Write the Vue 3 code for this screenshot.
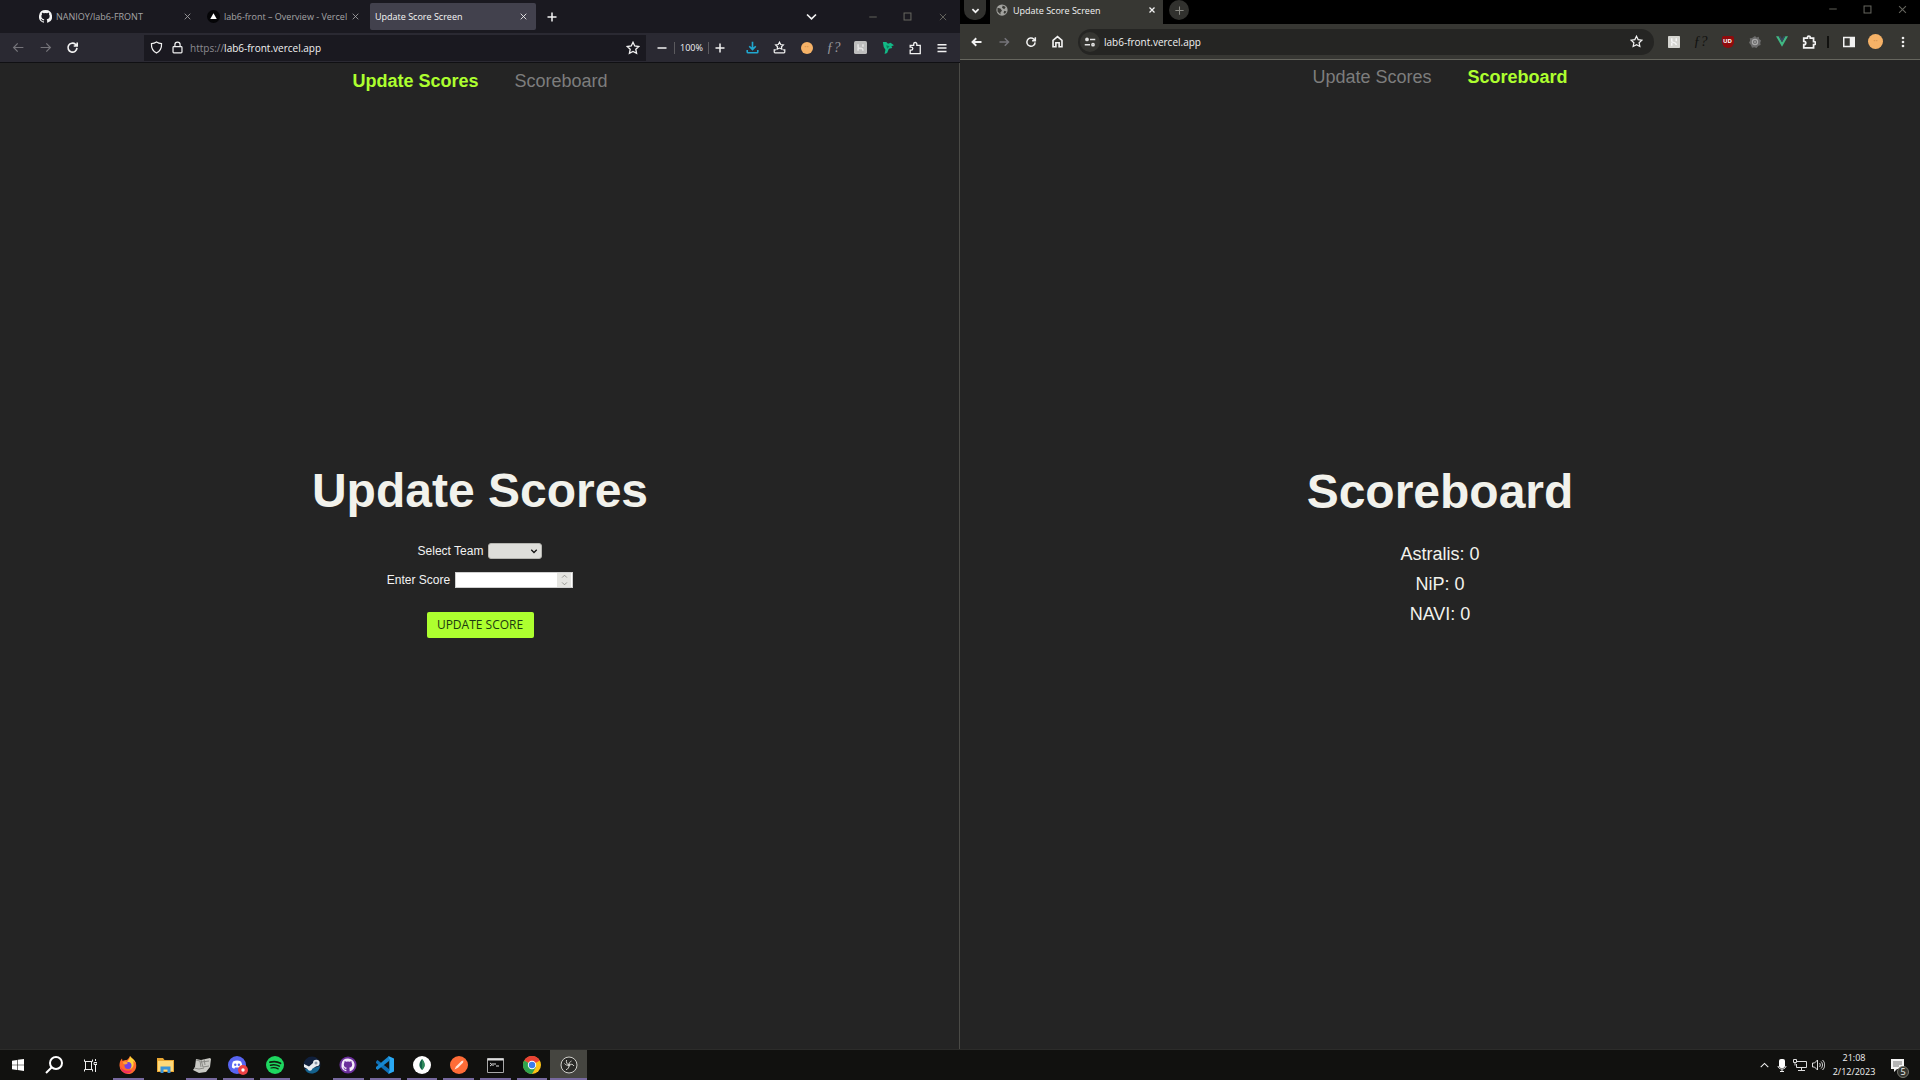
<script setup>
import { h, ref } from 'vue'

const glyphs = {
  back: 'M14 8H2M7 3L2 8l5 5',
  forward: 'M2 8h12M9 3l5 5-5 5',
  reload: 'M13.5 8.5a5.5 5.5 0 1 1-1.8-4.4L13.5 6M13.8 1.8V6.200H9.500',
  close: 'M3 3l10 10M13 3L3 13',
  plus: 'M8 2v12M2 8h12',
  minus: 'M2 8h12',
  square: 'M3 3h10v10H3z',
  down: 'M2.500 5.500L8 11l5.500-5.500',
  up: 'M2.500 10.500L8 5l5.500 5.500',
  shield: 'M8 1.300c2 1.400 4 1.900 6.200 2 .3 5-1.700 9-6.200 11.400C3.500 12.300 1.500 8.300 1.800 3.300 4 3.200 6 2.700 8 1.300z',
  lock: 'M3.500 7h9a1 1 0 0 1 1 1v5.500a1 1 0 0 1-1 1h-9a1 1 0 0 1-1-1V8a1 1 0 0 1 1-1zM4.800 7V4.600a3.200 3.200 0 0 1 6.400 0V7',
  star: 'M8 1.500l2 4.200 4.600.6-3.400 3.200.9 4.600L8 11.900l-4.100 2.200.9-4.600L1.400 6.300 6 5.700z',
  download: 'M8 1v9M4 6.500L8 10.500l4-4M1.500 11v2.500a1 1 0 0 0 1 1h11a1 1 0 0 0 1-1V11',
  saved: 'M8 1.500l1.500 2.800 3.200.5-2.300 2.200.5 3.100L8 8.700l-2.900 1.400.5-3.100-2.300-2.200 3.200-.5zM3.500 11H1.500v2.500a1 1 0 0 0 1 1h11a1 1 0 0 0 1-1V11h-2',
  puzzle: 'M2.500 14.500v-4h1.200a1.800 1.800 0 0 0 0-3.600H2.500V5h4V3.500a1.800 1.800 0 0 1 3.600 0V5h3.900v9.500z',
  puzzleRight: 'M2 3.500h4.200V2.800a1.600 1.600 0 0 1 3.200 0v.7h3.800v4h.6a1.700 1.700 0 0 1 0 3.400h-.6v3.800H2v-3.600h.4a1.900 1.900 0 0 0 0-3.800H2z',
  menu: 'M2 3.500h12M2 8h12M2 12.500h12',
  home: 'M2.500 6.500L8 2l5.500 4.500v8h-3.500V9.500H6v5H2.500z',
}

const octocat = 'M8 0a8 8 0 0 0-2.530 15.590c.4.070.550-.170.550-.380v-1.500C3.730 14.200 3.300 12.800 3.300 12.800c-.4-.9-.9-1.200-.9-1.200-.7-.5.1-.5.1-.5.8.1 1.200.8 1.200.8.7 1.200 1.900.9 2.400.7.1-.5.300-.9.500-1.100-1.800-.2-3.700-.9-3.700-4 0-.9.3-1.600.8-2.100-.1-.2-.4-1 .1-2.100 0 0 .7-.2 2.200.8a7.600 7.600 0 0 1 4 0c1.500-1 2.200-.8 2.200-.8.400 1.100.2 1.900.1 2.100.5.600.8 1.300.8 2.100 0 3.100-1.900 3.800-3.700 4 .3.300.6.8.6 1.500v2.200c0 .2.100.500.6.400A8 8 0 0 0 8 0z'

const Icon = ({ name, size = 14, weight = 1.5 }) =>
  h('svg', {
    width: size, height: size, viewBox: '0 0 16 16', fill: 'none',
    stroke: 'currentColor', 'stroke-width': weight, 'aria-hidden': 'true',
  }, [h('path', { d: glyphs[name] })])
Icon.props = ['name', 'size', 'weight']

const team = ref('')
const score = ref('')
const teams = ref([
  { name: 'Astralis', score: 0 },
  { name: 'NiP', score: 0 },
  { name: 'NAVI', score: 0 },
])
function updateScore() {
  const match = teams.value.find((t) => t.name === team.value)
  if (match && score.value !== '') match.score = Number(score.value)
}
</script>

<template>
  <div class="desktop">
    <div class="windows">
      <section class="pane firefox" aria-label="Firefox">
        <div class="ff-tabs">
          <div class="ff-tab">
            <svg width="13" height="13" viewBox="0 0 16 16" fill="#f4f4f4"><path :d="octocat" /></svg>
            <button class="title">NANIOY/lab6-FRONT</button>
            <button class="x" aria-label="Close tab"><Icon name="close" :size="9" /></button>
          </div>
          <div class="ff-tab">
            <svg width="13" height="13" viewBox="0 0 16 16"><circle cx="8" cy="8" r="8" fill="#050507" /><path d="M8 4l4 7H4z" fill="#fff" /></svg>
            <button class="title">lab6-front – Overview - Vercel</button>
            <button class="x" aria-label="Close tab"><Icon name="close" :size="9" /></button>
          </div>
          <div class="ff-tab active">
            <button class="title">Update Score Screen</button>
            <button class="x" aria-label="Close tab"><Icon name="close" :size="9" /></button>
          </div>
          <button class="slot light" aria-label="New tab"><Icon name="plus" :size="12" weight="2" /></button>
          <span class="fill"></span>
          <button class="slot light list-tabs" aria-label="List all tabs"><Icon name="down" :size="13" weight="2" /></button>
          <div class="wincontrols">
            <button class="winbtn" aria-label="Minimize"><Icon name="minus" :size="10" /></button>
            <button class="winbtn" aria-label="Maximize"><Icon name="square" :size="11" /></button>
            <button class="winbtn" aria-label="Close"><Icon name="close" :size="10" /></button>
          </div>
        </div>

        <div class="ff-bar">
          <button class="slot dim" aria-label="Back"><Icon name="back" :size="13" /></button>
          <button class="slot dim" aria-label="Forward"><Icon name="forward" :size="13" /></button>
          <button class="slot" aria-label="Reload"><Icon name="reload" :size="13" weight="2" /></button>
          <div class="ff-url">
            <Icon name="shield" :size="13" />
            <Icon name="lock" :size="13" />
            <label for="ff-address">https://</label>
            <input id="ff-address" type="text" value="lab6-front.vercel.app" />
            <button class="slot" aria-label="Bookmark"><Icon name="star" :size="14" /></button>
          </div>
          <button class="zoom-out" aria-label="Zoom out"><Icon name="minus" :size="12" weight="2" /></button>
          <button class="zoom-level">100%</button>
          <button class="zoom-in" aria-label="Zoom in"><Icon name="plus" :size="12" weight="2" /></button>
          <button class="slot cyan" aria-label="Downloads"><Icon name="download" :size="13" weight="2" /></button>
          <button class="slot" aria-label="Bookmarks"><Icon name="saved" :size="13" /></button>
          <button class="slot" aria-label="Account"><span class="face">••</span></button>
          <button class="slot fn">ƒ?</button>
          <button class="slot" aria-label="Extension"><svg width="13" height="13" viewBox="0 0 16 16"><rect width="16" height="16" rx="2" fill="#bdbdbd" /><path d="M5 4v3c0 2 1 2 3 2s3 0 3 3M5 12V9M11 4v3" stroke="#e4e4e4" stroke-width="2" fill="none" /></svg></button>
          <button class="slot" aria-label="Extension"><svg width="12" height="13" viewBox="0 0 14 15"><path d="M1 1h4l2 2 3-1 4 3-3 1 1 2-4 1-2 5-3 1 1-5-2-3z" fill="#12b886" /><path d="M5 5l4 1-3 3z" fill="#087f5b" /></svg></button>
          <button class="slot" aria-label="Extensions"><Icon name="puzzle" :size="14" /></button>
          <button class="slot" aria-label="Menu"><Icon name="menu" :size="12" weight="2" /></button>
        </div>

        <div class="page">
          <nav>
            <a href="#update" class="current">Update Scores</a>
            <a href="#scoreboard">Scoreboard</a>
          </nav>
          <main>
            <h1>Update Scores</h1>
            <form @submit.prevent="updateScore">
              <div class="field">
                <label for="team">Select Team</label>
                <span class="control team">
                  <select id="team" v-model="team">
                    <option value=""></option>
                    <option v-for="t in teams" :key="t.name" :value="t.name">{{ t.name }}</option>
                  </select>
                  <Icon name="down" :size="8" weight="2.500" />
                </span>
              </div>
              <div class="field">
                <label for="score">Enter Score</label>
                <span class="control score">
                  <input id="score" v-model="score" type="number" />
                  <span class="spin"><Icon name="up" :size="7" weight="2" /><Icon name="down" :size="7" weight="2" /></span>
                </span>
              </div>
              <button type="submit" class="submit">UPDATE SCORE</button>
            </form>
          </main>
        </div>
      </section>

      <section class="pane chrome" aria-label="Chrome">
        <div class="cr-tabs">
          <button class="round" aria-label="Search tabs"><Icon name="down" :size="9" weight="3" /></button>
          <div class="cr-tab">
            <svg width="12" height="12" viewBox="0 0 16 16"><circle cx="8" cy="8" r="7.500" fill="#a3a39f" /><path d="M2 5l4 1 2 3-2 2v3L2 10zM9 2l4 2-2 3-3-2zM11 9l3 1-2 3-2-1z" fill="#3a3a36" /></svg>
            <button class="title">Update Score Screen</button>
            <button class="x" aria-label="Close tab"><Icon name="close" :size="8" weight="2.500" /></button>
          </div>
          <button class="round new" aria-label="New tab"><Icon name="plus" :size="11" /></button>
          <span class="fill"></span>
          <div class="wincontrols">
            <button class="winbtn" aria-label="Minimize"><Icon name="minus" :size="10" /></button>
            <button class="winbtn" aria-label="Maximize"><Icon name="square" :size="11" /></button>
            <button class="winbtn" aria-label="Close"><Icon name="close" :size="11" /></button>
          </div>
        </div>

        <div class="cr-bar">
          <button class="slot" aria-label="Back"><Icon name="back" :size="12" weight="2.500" /></button>
          <button class="slot dim" aria-label="Forward"><Icon name="forward" :size="12" weight="2" /></button>
          <button class="slot" aria-label="Reload"><Icon name="reload" :size="12" weight="2" /></button>
          <button class="slot" aria-label="Home"><Icon name="home" :size="13" weight="2" /></button>
          <div class="cr-url">
            <button class="site" aria-label="Site information">
              <svg width="12" height="12" viewBox="0 0 16 16" fill="none" stroke="#e3e3e3" stroke-width="2"><circle cx="4" cy="4.500" r="1.500" fill="#e3e3e3" /><path d="M8 4.500h7M1 11.500h7" /><circle cx="12" cy="11.500" r="1.500" /></svg>
            </button>
            <input type="text" aria-label="Address" value="lab6-front.vercel.app" />
            <button class="slot" aria-label="Bookmark"><Icon name="star" :size="13" /></button>
          </div>
          <button class="slot" aria-label="Extension"><svg width="12" height="12" viewBox="0 0 16 16"><rect width="16" height="16" rx="1" fill="#d4d4cf" /><path d="M5 3v4c0 2 6 1 6 5M5 13V9M11 3v4" stroke="#f5f5f5" stroke-width="2" fill="none" /></svg></button>
          <button class="slot fn dark">ƒ?</button>
          <button class="slot" aria-label="uBlock"><span class="ublock">UD</span></button>
          <button class="slot" aria-label="Extension"><svg width="12" height="12" viewBox="0 0 16 16"><path d="M8 0l2 2 3-1 .5 3L16 6l-1 3 .5 3-3 1L10 16l-3-1-3 .5L2.500 12 0 9l1.500-3L1 3l3-.5z" fill="#6c6c6c" /><circle cx="8" cy="8" r="3.500" fill="none" stroke="#aaa" stroke-width="1.500" /><circle cx="8" cy="8" r="1" fill="#ccc" /></svg></button>
          <button class="slot" aria-label="Vue devtools"><svg width="12" height="11" viewBox="0 0 16 14"><path d="M0 0h3.500L8 8l4.500-8H16L8 14z" fill="#41b883" /><path d="M3.500 0H6l2 3.500L10 0h2.500L8 8z" fill="#35495e" /></svg></button>
          <button class="slot" aria-label="Extensions"><Icon name="puzzleRight" :size="14" weight="2" /></button>
          <span class="divider"></span>
          <button class="slot" aria-label="Side panel"><svg width="12" height="12" viewBox="0 0 16 16"><path d="M1 2h14v12H1z" fill="none" stroke="#f1f1f1" stroke-width="2" /><path d="M9 2h6v12H9z" fill="#f1f1f1" /></svg></button>
          <button class="slot" aria-label="Profile"><span class="face big">••</span></button>
          <button class="slot" aria-label="Menu"><svg width="4" height="12" viewBox="0 0 4 12" fill="#eee"><circle cx="2" cy="2" r="1.300" /><circle cx="2" cy="6" r="1.300" /><circle cx="2" cy="10" r="1.300" /></svg></button>
        </div>

        <div class="page">
          <nav>
            <a href="#update">Update Scores</a>
            <a href="#scoreboard" class="current">Scoreboard</a>
          </nav>
          <main>
            <h1>Scoreboard</h1>
            <ul class="scores">
              <li v-for="t in teams" :key="t.name">{{ t.name }}: {{ t.score }}</li>
            </ul>
          </main>
        </div>
      </section>
    </div>

    <footer class="taskbar">
      <button class="sys" aria-label="Start"><svg width="12" height="12" viewBox="0 0 16 16" fill="#fff"><path d="M0 2.200l6.800-1v6.300H0zM7.600 1.100L16 0v7.500H7.600zM0 8.400h6.800v6.300l-6.800-1zM7.600 8.400H16V16l-8.400-1.200z" /></svg></button>
      <button class="sys" aria-label="Search"><svg width="18" height="18" viewBox="0 0 18 18" fill="none" stroke="#fff" stroke-width="2"><circle cx="11" cy="7" r="6" /><path d="M6.500 11.500L1 17" /></svg></button>
      <button class="sys" aria-label="Task view"><svg width="13" height="13" viewBox="0 0 13 13" fill="none" stroke="#eee"><path d="M.5.500v2h8v-2M.5 12.500v-2h8v2M1.500 3v7.500M7.500 3v7.500M11.500 0v2M11.500 6v7M10 3.500h3v2h-3z" /></svg></button>
      <div class="apps">
        <button class="app open" aria-label="Firefox">
          <svg width="18" height="18" viewBox="0 0 18 18"><path d="M9 18a8.500 8.500 0 0 1-8.500-9C.6 6 1.500 4 3 2.500L3.500 5C5 4 6.500 4 7.500 4 9 3.500 10 2 11 0c1 2 4 3 5.500 6 2.500 6-1.500 12-7.500 12z" fill="#ff6a2b" /><path d="M11 0c1 2 5 3.500 6 8-1-2-2-2.500-3-3 1.500 4 0 7-3 8.500 2-4 .5-7-3-8C10 4 11 2 11 0z" fill="#ffd43a" /><circle cx="9" cy="9.500" r="3.500" fill="#7542e5" /><path d="M1 10c2 4 7 6 12 4-2 5-10 5-12-4z" fill="#f5305f" /><path d="M4 6c2-1 4 0 5 1L7 8.500 4.500 8z" fill="#ffa436" /></svg>
        </button>
        <button class="app" aria-label="File Explorer">
          <svg width="17" height="15" viewBox="0 0 17 15"><path d="M0 0h6l1.500 2H17v12H0z" fill="#e9a733" /><path d="M1 3h15v10H1z" fill="#ffd979" /><path d="M3.500 15V8.500h10V15h-3v-3.500h-4V15z" fill="#3a94d8" /></svg>
        </button>
        <button class="app open" aria-label="Notepad">
          <svg width="18" height="16" viewBox="0 0 18 16"><path d="M3 2l5 1 9-2 1 1-1 8-4 5-7 1-6-3 2-3z" fill="#c9c9c4" /><path d="M3 3l4 1 1 6M8 3l2 7 6-1M8 5l8-1M1 11l5 1 5-1M11 2l1 6" stroke="#8a8a86" fill="none" /></svg>
        </button>
        <button class="app open" aria-label="Discord">
          <svg width="20" height="19" viewBox="0 0 20 19"><circle cx="9" cy="9" r="9" fill="#5865f2" /><path d="M5 5.500c2.500-1.500 5.500-1.500 8 0 1 2 1.500 4 1.200 6-1 .8-1.700 1-2.500 1.200L11 11.500H7l-.7 1.200C5.500 12.500 4.800 12.200 4 11.500c-.3-2 .2-4 1-6z" fill="#fff" /><circle cx="7.300" cy="8.800" r="1.200" fill="#5865f2" /><circle cx="10.900" cy="8.800" r="1.200" fill="#5865f2" /><circle cx="15" cy="14" r="5" fill="#ed4245" /><circle cx="15" cy="14" r="1.700" fill="#fff" /></svg>
        </button>
        <button class="app open" aria-label="Spotify">
          <svg width="18" height="18" viewBox="0 0 18 18" fill="none" stroke="#10200f" stroke-linecap="round"><circle cx="9" cy="9" r="9" fill="#1ed760" stroke="none" /><path d="M4 6.200c3.500-1 7.500-.7 10.500 1" stroke-width="1.800" /><path d="M4.500 9.200c3-.8 6-.5 8.800 1" stroke-width="1.500" /><path d="M5 12c2.500-.6 5-.3 7.200.9" stroke-width="1.200" /></svg>
        </button>
        <button class="app" aria-label="Steam">
          <svg width="18" height="18" viewBox="0 0 18 18"><circle cx="9" cy="9" r="8.500" fill="#10203c" /><path d="M2 13c5 0 10-1 15-3-1 9-13 10-15 3z" fill="#14618c" /><path d="M1 8l5 2.500 4-3.500a3.300 3.300 0 1 1 3.300 3.300l-4 2.500A2.500 2.500 0 0 1 4.500 13L1 11z" fill="#e9edf1" /><circle cx="13" cy="7" r="1.500" fill="#8a97a8" /></svg>
        </button>
        <button class="app open" aria-label="GitHub Desktop">
          <svg width="18" height="18" viewBox="-3 -3 22 22"><circle cx="8" cy="8" r="10.500" fill="#6b2f9b" /><path :d="octocat" fill="#f3eafa" /></svg>
        </button>
        <button class="app open" aria-label="Visual Studio Code">
          <svg width="18" height="18" viewBox="0 0 18 18"><path d="M0 5.500L1.500 4 13 13v5L0 7z" fill="#0f6fb5" /><path d="M0 12.500L1.500 14 13 5V0L0 11z" fill="#1787cf" /><path d="M12.500 0L18 2.500v13L12.500 18l.8-4V4z" fill="#2aa9f4" /></svg>
        </button>
        <button class="app open" aria-label="MongoDB Compass">
          <svg width="18" height="18" viewBox="0 0 18 18"><circle cx="9" cy="9" r="9" fill="#fff" /><path d="M9 3c3.500 4 3.500 8 0 11-3.500-3-3.500-7 0-11z" fill="#116149" /><path d="M9 3c3.500 4 3.500 8 0 11z" fill="#2f8a5a" /></svg>
        </button>
        <button class="app open" aria-label="Postman">
          <svg width="18" height="18" viewBox="0 0 18 18"><circle cx="9" cy="9" r="9" fill="#ff6c37" /><path d="M4.500 13.500l1.500-3 5.500-5.500 2-.5-.5 2.300-5 5z" fill="#ffe4d8" /></svg>
        </button>
        <button class="app open" aria-label="Command Prompt">
          <svg width="17" height="15" viewBox="0 0 17 15"><path d="M.5.500h16v14H.5z" fill="#090909" stroke="#a8a8a8" /><path d="M.5 1.500h16" stroke="#ddd" stroke-width="2" /><path d="M3 5l2 1.500L3 8M6 5v3M8 5v2M9 8h3" stroke="#ddd" fill="none" /></svg>
        </button>
        <button class="app open" aria-label="Chrome">
          <svg width="18" height="18" viewBox="0 0 18 18"><circle cx="9" cy="9" r="9" fill="#fbc116" /><path d="M9 9L1.200 4.500a9 9 0 0 1 15.600 0z" fill="#ea4335" /><path d="M9 9L1.200 4.500A9 9 0 0 0 9 18l3.900-6.700z" fill="#30a44e" /><path d="M9 5h7.800l-.3-.7L9 3z" fill="#ea4335" /><circle cx="9" cy="9" r="4.200" fill="#fff" /><circle cx="9" cy="9" r="3.200" fill="#3b7ded" /></svg>
        </button>
        <button class="app open selected" aria-label="OBS Studio">
          <svg width="18" height="18" viewBox="0 0 18 18" fill="none" stroke="#d0d0cb"><circle cx="9" cy="9" r="8" fill="#2a2a27" /><path d="M6.500 4c-.5 2.500.5 4.300 2.500 5 2-1.200 3.800-1 5 1M9 9c.2 2.300-.8 4-3 4.800M9 9c-1.800.6-3.500 0-4.500-1.500M9 9c0-2 .8-3.200 2.500-4" /><circle cx="9" cy="9" r="1" fill="#d0d0cb" /></svg>
        </button>
      </div>
      <span class="fill"></span>
      <button class="tray" aria-label="Hidden icons"><Icon name="up" :size="11" /></button>
      <button class="tray" aria-label="Microphone"><svg width="10" height="13" viewBox="0 0 10 13"><rect x="2" width="6" height="9" rx="2" fill="#fff" /><path d="M1 7c0 4 8 4 8 0M5 10v3M3 12.500h4" stroke="#eee" fill="none" /></svg></button>
      <button class="tray" aria-label="Network"><svg width="14" height="12" viewBox="0 0 14 12" fill="none" stroke="#ddd"><path d="M4 2.500h9.500v6H3.500V5M8.500 8.500v3M5 11.500h7" /><path d="M.5.500h3v3h-3zM2 3.500v3" /></svg></button>
      <button class="tray" aria-label="Volume"><svg width="13" height="12" viewBox="0 0 13 12" fill="none" stroke="#ddd"><path d="M.5 4h2l3-3v10l-3-3h-2zM7.500 4c1 1 1 3 0 4M9 2.500c2 2 2 5 0 7M10.500 1c3 3 3 7 0 10" /></svg></button>
      <time class="clock" datetime="2023-12-02T21:08"><span>21:08</span><span>2/12/2023</span></time>
      <button class="notes" aria-label="Notifications">
        <svg width="13" height="13" viewBox="0 0 13 13"><path d="M0 0h13v10H6l-3 3v-3H0z" fill="#f4f4f4" /><path d="M2 3h9M2 5h9M2 7h6" stroke="#777" /></svg>
        <span class="badge">5</span>
      </button>
    </footer>
  </div>
</template>

<style>
body { background: #242424; }
</style>

<style scoped>
.desktop { display: flex; flex-direction: column; min-height: 100vh; background: #242424; font-family: "Open Sans", "Noto Sans", sans-serif; color: #f2f2f2; }
.desktop, .desktop * { box-sizing: border-box; }
button { margin: 0; padding: 0; border: 0; background: none; color: inherit; font: inherit; display: flex; align-items: center; justify-content: center; flex: none; }
input, select { margin: 0; padding: 0; border: 0; outline: 0; font: inherit; color: inherit; background: none; }
svg { display: block; flex: none; }
.fill { flex: 1; }
.windows { flex: 1; display: grid; grid-template-columns: 1fr 1fr; }
.pane { display: flex; flex-direction: column; min-width: 0; }
.firefox { box-shadow: inset -1px 0 #4a4a46; }
.slot { width: 27px; height: 26px; }
.dim { color: #75747a; }
.light { color: #f4f4f4; }
.cyan { color: #20a8d0; }
.wincontrols { display: flex; }
.winbtn { width: 35px; height: 18px; color: #66665f; }

.ff-tabs { height: 33px; display: flex; align-items: center; gap: 2px; background: #1a1920; padding-left: 34px; }
.ff-tab { width: 166px; height: 27px; display: flex; align-items: center; gap: 4px; padding: 0 8px 0 5px; color: #a5a4a6; }
.ff-tab .title { flex: 1; justify-content: flex-start; font-size: 9px; white-space: nowrap; min-width: 0; }
.ff-tab.active { background: #42414d; color: #f6f6f6; border-radius: 2px; }
.list-tabs { margin-right: 28px; }

.ff-bar { height: 30px; display: flex; align-items: center; background: #2a2932; border-bottom: 1px solid #101013; padding: 0 5px; }
.ff-url { flex: 1; height: 26px; margin-left: 58px; padding-left: 6px; display: flex; align-items: center; gap: 8px; background: #1a1920; font-size: 10px; min-width: 0; }
.ff-url label { color: #8c8b90; margin-left: -2px; }
.ff-url input { flex: 1; min-width: 0; margin-left: -8px; }
.zoom-out { width: 25px; height: 26px; margin-left: 3px; }
.zoom-level { width: 35px; height: 12px; border-left: 1px solid #5b5a5e; border-right: 1px solid #5b5a5e; font-size: 9px; }
.zoom-in { width: 22px; height: 26px; margin-right: 8px; }
.face { width: 12px; height: 12px; border-radius: 50%; background: #f6b267; color: #d8954f; font-size: 6px; line-height: 11px; text-align: center; }
.face.big { width: 15px; height: 15px; line-height: 14px; }
.fn { font-family: "Liberation Serif", serif; font-style: italic; font-size: 14px; color: #98979c; }
.fn.dark { color: #11110f; }

.cr-tabs { height: 24px; display: flex; align-items: flex-start; background: #000; padding-left: 4px; }
.round { width: 22px; height: 20px; border-radius: 0 0 10px 10px; background: #31312e; }
.round.new { width: 20px; border-radius: 10px; margin-left: 6px; color: #8a8a84; }
.cr-tab { width: 173px; height: 24px; margin-left: 4px; padding: 0 7px 4px 6px; display: flex; align-items: center; gap: 5px; background: #373733; }
.cr-tab .title { flex: 1; justify-content: flex-start; font-size: 9px; white-space: nowrap; }
.cr-bar { height: 36px; display: flex; align-items: center; background: #373733; border-bottom: 1px solid #66665e; padding: 0 4px 0 3px; }
.cr-url { flex: 1; height: 26px; margin-left: 7px; margin-right: 6px; padding: 0 4px 0 2px; display: flex; align-items: center; gap: 4px; background: #252523; border-radius: 13px; font-size: 10px; min-width: 0; }
.cr-url input { flex: 1; min-width: 0; }
.site { width: 20px; height: 20px; border-radius: 10px; background: #353531; }
.divider { width: 2px; height: 12px; margin: 0 6px 0 5px; background: #11110f; }
.ublock { width: 12px; height: 12px; border-radius: 2px 2px 6px 6px; background: #8f0b0d; color: #fff; font-size: 6px; font-weight: 700; line-height: 11px; text-align: center; }

.page { flex: 1; position: relative; display: flex; flex-direction: column; justify-content: center; font-family: "Liberation Sans", Arial, sans-serif; }
nav { position: absolute; top: 0; left: 0; right: 0; height: 36px; display: flex; justify-content: center; align-items: center; gap: 36px; font-size: 18px; }
.chrome nav { height: 34px; }
nav a { color: #7d7d7d; text-decoration: none; }
nav a.current { color: #adff2f; font-weight: 700; }
main { display: flex; flex-direction: column; align-items: center; padding-bottom: 12px; }
.chrome main { padding-bottom: 16px; }
h1 { margin: 0; font-size: 48px; line-height: 56px; font-weight: 700; color: #f2f2ec; }
form { display: flex; flex-direction: column; align-items: center; margin-top: 24px; font-size: 12px; }
.field { display: flex; align-items: center; gap: 5px; height: 16px; margin-bottom: 13px; }
.control { position: relative; display: flex; height: 16px; }
.team { width: 54px; }
.team select { width: 100%; height: 16px; appearance: none; background: #dededa; border: 1px solid #b5b5b0; border-radius: 3px; color: #111; }
.team svg { position: absolute; right: 4px; top: 4px; color: #111; pointer-events: none; }
.score { width: 118px; }
.score input { width: 100%; height: 16px; padding: 0 18px 0 3px; background: #fff; color: #111; border: 1px solid #cfcfcf; appearance: textfield; }
.spin { position: absolute; right: 2px; top: 1px; width: 14px; height: 14px; display: flex; flex-direction: column; align-items: center; background: #e4e4e0; color: #8a8a86; pointer-events: none; }
.submit { margin-top: 11px; width: 107px; height: 26px; border-radius: 2px; background: #adff2f; color: #1c3a10; font-family: "Open Sans", "Noto Sans", sans-serif; font-size: 12px; }
.scores { list-style: none; margin: 19px 0 0; padding: 0; text-align: center; font-size: 18px; line-height: 30px; color: #f2f2ec; }

.taskbar { height: 31px; display: flex; align-items: stretch; background: #11110f; border-top: 1px solid #2c2c2a; padding-right: 7px; }
.sys { width: 36px; }
.apps { width: 477px; display: flex; margin-left: 2px; }
.app { flex: 1; position: relative; }
.app.open::after { content: ""; position: absolute; left: 3px; right: 3px; bottom: 0; height: 2px; background: #77699f; }
.app.selected { background: #454540; }
.app.selected::after { left: 0; right: 0; }
.tray { width: 18px; }
.clock { width: 54px; display: flex; flex-direction: column; align-items: center; justify-content: center; font-size: 9px; line-height: 14px; }
.notes { position: relative; width: 32px; }
.badge { position: absolute; left: 16px; top: 16px; width: 12px; height: 12px; border-radius: 50%; background: #35352f; border: 1px solid #77776f; font-size: 9px; line-height: 10px; text-align: center; }
</style>
